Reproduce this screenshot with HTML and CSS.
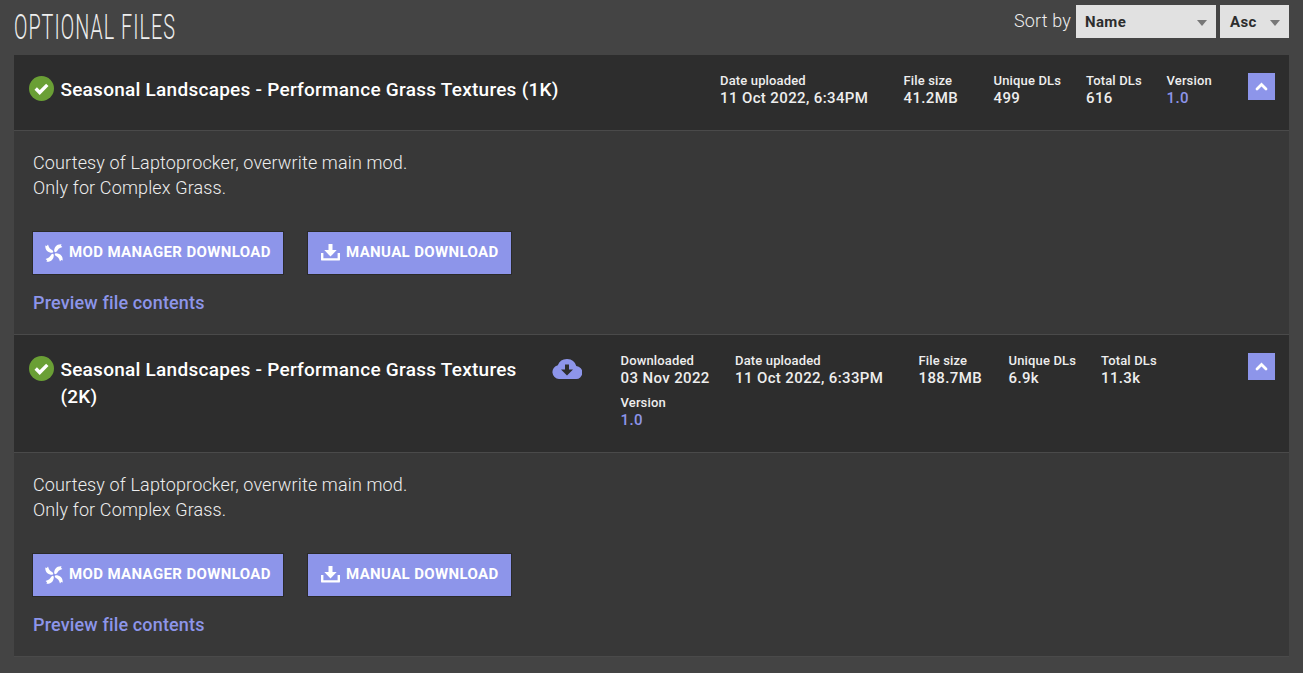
FILE: index.html
```html
<!DOCTYPE html>
<html lang="en">
<head>
    <meta charset="UTF-8">
    <meta name="viewport" content="width=device-width, initial-scale=1.0">
    <title>Optional files</title>
    <link rel="stylesheet" href="styles.css">
</head>
<body>
    <!-- shared icons -->
    <svg class="sprite">
        <symbol id="check" viewBox="0 0 25 25">
            <circle cx="12.5" cy="12.5" r="12.5" fill="#6a9f35"/>
            <path d="M6.700 12.500l4 4 7.600-7.600" fill="none" stroke="#fff" stroke-width="3.4"/>
        </symbol>
        <symbol id="up" viewBox="0 0 12 9">
            <path d="M1.500 7L6 2.500 10.500 7" fill="none" stroke="#fff" stroke-width="2.800" stroke-linecap="round"/>
        </symbol>
        <symbol id="manager" viewBox="0 0 18 18">
            <g fill="#fff">
                <path id="blade" d="M9.200 7.600C9 3.500 11.300 0 16.500 0.300L16 1.800 17.400 3 15 3.900C12.800 4.700 12.800 6.800 10.700 8.300z"/>
                <use href="#blade" transform="rotate(90 9 9)"/>
                <use href="#blade" transform="rotate(180 9 9)"/>
                <use href="#blade" transform="rotate(270 9 9)"/>
            </g>
        </symbol>
        <symbol id="manual" viewBox="0 0 19 17">
            <path d="M7.500 0h4v6h4.200L9.500 12.600 3.300 6h4.200z" fill="#fff"/>
            <path d="M1.200 9v6.400h16.600V9" fill="none" stroke="#fff" stroke-width="2.400" stroke-linejoin="round"/>
        </symbol>
        <symbol id="cloud" viewBox="0 0 30 21">
            <path d="M7 21a7 7 0 0 1-1.200-13.800A9.800 9.800 0 0 1 24.300 8 6.500 6.500 0 0 1 23.500 21z" fill="#8d95ea"/>
            <path d="M13 6.500h4v5h4L15 17.500 9 11.500h4z" fill="#2d2d2d"/>
        </symbol>
    </svg>

    <div class="top">
        <h2>OPTIONAL FILES</h2>
        <div class="sort">
            <span>Sort by</span>
            <div class="select name">Name</div>
            <div class="select asc">Asc</div>
        </div>
    </div>

    <div class="files">
        <div class="file-header">
            <svg class="check"><use href="#check"/></svg>
            <h3>Seasonal Landscapes - Performance Grass Textures (1K)</h3>
            <div class="stats">
                <div class="date">Date uploaded<b>11 Oct 2022, 6:34PM</b></div>
                <div class="size">File size<b>41.2MB</b></div>
                <div class="unique">Unique DLs<b>499</b></div>
                <div class="total">Total DLs<b>616</b></div>
                <div class="version">Version<b>1.0</b></div>
            </div>
            <button class="toggle"><svg><use href="#up"/></svg></button>
        </div>
        <div class="file-body">
            <p>Courtesy of Laptoprocker, overwrite main mod.<br>Only for Complex Grass.</p>
            <div class="buttons">
                <a class="btn manager"><svg><use href="#manager"/></svg><span>MOD MANAGER DOWNLOAD</span></a>
                <a class="btn manual"><svg><use href="#manual"/></svg><span>MANUAL DOWNLOAD</span></a>
            </div>
            <a class="preview">Preview file contents</a>
        </div>

        <div class="file-header tall">
            <svg class="check"><use href="#check"/></svg>
            <h3>Seasonal Landscapes - Performance Grass Textures (2K)</h3>
            <svg class="cloud"><use href="#cloud"/></svg>
            <div class="stats">
                <div class="downloaded">Downloaded<b>03 Nov 2022</b></div>
                <div class="date">Date uploaded<b>11 Oct 2022, 6:33PM</b></div>
                <div class="size">File size<b>188.7MB</b></div>
                <div class="unique">Unique DLs<b>6.9k</b></div>
                <div class="total">Total DLs<b>11.3k</b></div>
                <div class="version">Version<b>1.0</b></div>
            </div>
            <button class="toggle"><svg><use href="#up"/></svg></button>
        </div>
        <div class="file-body">
            <p>Courtesy of Laptoprocker, overwrite main mod.<br>Only for Complex Grass.</p>
            <div class="buttons">
                <a class="btn manager"><svg><use href="#manager"/></svg><span>MOD MANAGER DOWNLOAD</span></a>
                <a class="btn manual"><svg><use href="#manual"/></svg><span>MANUAL DOWNLOAD</span></a>
            </div>
            <a class="preview">Preview file contents</a>
        </div>
    </div>
</body>
</html>
```

FILE: styles.css
```css
* {
    box-sizing: border-box;
}
body {
    margin: 0;
    padding: 0 14px;
    height: 673px;
    overflow: hidden;
    background-color: #444;
    color: #eee;
    font-family: Roboto, "Liberation Sans", sans-serif;
}
.sprite {
    display: none;
}
.top {
    display: flex;
    justify-content: space-between;
    height: 55px;
}
h2 {
    margin: 0;
    padding-top: 7px;
    font-size: 35px;
    line-height: 41px;
    font-weight: 300;
    letter-spacing: 1.8px;
    white-space: nowrap;
    transform: scaleX(0.565);
    transform-origin: left;
}
.sort {
    display: flex;
    gap: 4px;
    padding-top: 5px;
    font-size: 18px;
    font-weight: 300;
    line-height: 32px;
    letter-spacing: 0.15px;
}
.sort span {
    margin-right: 1px;
}
.select {
    display: flex;
    justify-content: space-between;
    align-items: center;
    height: 33px;
    padding: 0 9px;
    background-color: #e1e1e1;
    color: #2d2d2d;
    font-size: 15px;
    font-weight: 700;
    letter-spacing: 0.35px;
}
.select::after {
    content: "";
    margin-top: 3px;
    border: 5px solid transparent;
    border-top: 6px solid #777;
    border-bottom: 0;
}
.name {
    width: 140px;
}
.asc {
    width: 69px;
    padding-left: 10px;
}
.files {
    height: 602px;
    background-color: #383838;
    border-bottom: 1px solid #4a4a4a;
}
.file-header {
    display: flex;
    align-items: flex-start;
    height: 76px;
    padding: 18px 14px 0 15px;
    background-color: #2d2d2d;
    border-bottom: 1px solid #4a4a4a;
}
.tall {
    height: 119px;
    border-top: 1px solid #4a4a4a;
}
.check {
    flex: none;
    width: 25px;
    height: 25px;
    margin-top: 3px;
}
h3 {
    width: 505px;
    margin: 3px 0 0 6.4px;
    color: #fff;
    font-size: 19px;
    line-height: 27px;
    font-weight: 500;
    letter-spacing: 0.26px;
}
.tall h3 {
    width: 480px;
}
.cloud {
    width: 30px;
    height: 21px;
    margin: 5px 0 0 12px;
}
.stats {
    display: flex;
    flex-wrap: wrap;
    row-gap: 7px;
    margin-left: auto;
    font-size: 13px;
    line-height: 15px;
    font-weight: 500;
    letter-spacing: 0.15px;
    white-space: nowrap;
}
.tall .stats {
    width: 599.5px;
}
.stats b {
    display: block;
    font-size: 15px;
    line-height: 20px;
    font-weight: 500;
    letter-spacing: 0.38px;
}
.downloaded {
    width: 114.5px;
}
.date {
    width: 183.5px;
}
.size {
    width: 90px;
}
.unique {
    width: 92.5px;
}
.total {
    width: 80.5px;
}
.version {
    width: 53.5px;
}
.version b {
    color: #8d95ea;
}
.toggle {
    display: flex;
    justify-content: center;
    align-items: center;
    width: 27px;
    height: 27px;
    margin-left: 28px;
    padding: 0;
    border: 0;
    background-color: #8d95ea;
}
.toggle svg {
    width: 13px;
    height: 9px;
}
.file-body {
    height: 203px;
    padding: 19px;
}
p {
    margin: 0 0 32px;
    font-size: 18px;
    line-height: 25px;
    font-weight: 300;
    letter-spacing: 0.14px;
}
.buttons {
    display: flex;
    gap: 25px;
}
.btn {
    display: flex;
    align-items: center;
    height: 42px;
    padding-left: 12px;
    background-color: #8d95ea;
    box-shadow: 0 0 0 1px #2a2a2a;
    color: #fff;
    font-size: 15px;
    font-weight: 700;
    letter-spacing: 0.37px;
    white-space: nowrap;
}
.btn span {
    margin: -2px 0 0 6px;
}
.manager {
    width: 250px;
}
.manual {
    width: 203px;
    padding-left: 13px;
}
.manager svg {
    width: 18px;
    height: 18px;
}
.manual svg {
    width: 19px;
    height: 17px;
    margin-top: -1px;
}
.preview {
    display: block;
    margin-top: 16px;
    color: #8d95ea;
    font-size: 18px;
    line-height: 25px;
    font-weight: 500;
    letter-spacing: 0.15px;
}
```
